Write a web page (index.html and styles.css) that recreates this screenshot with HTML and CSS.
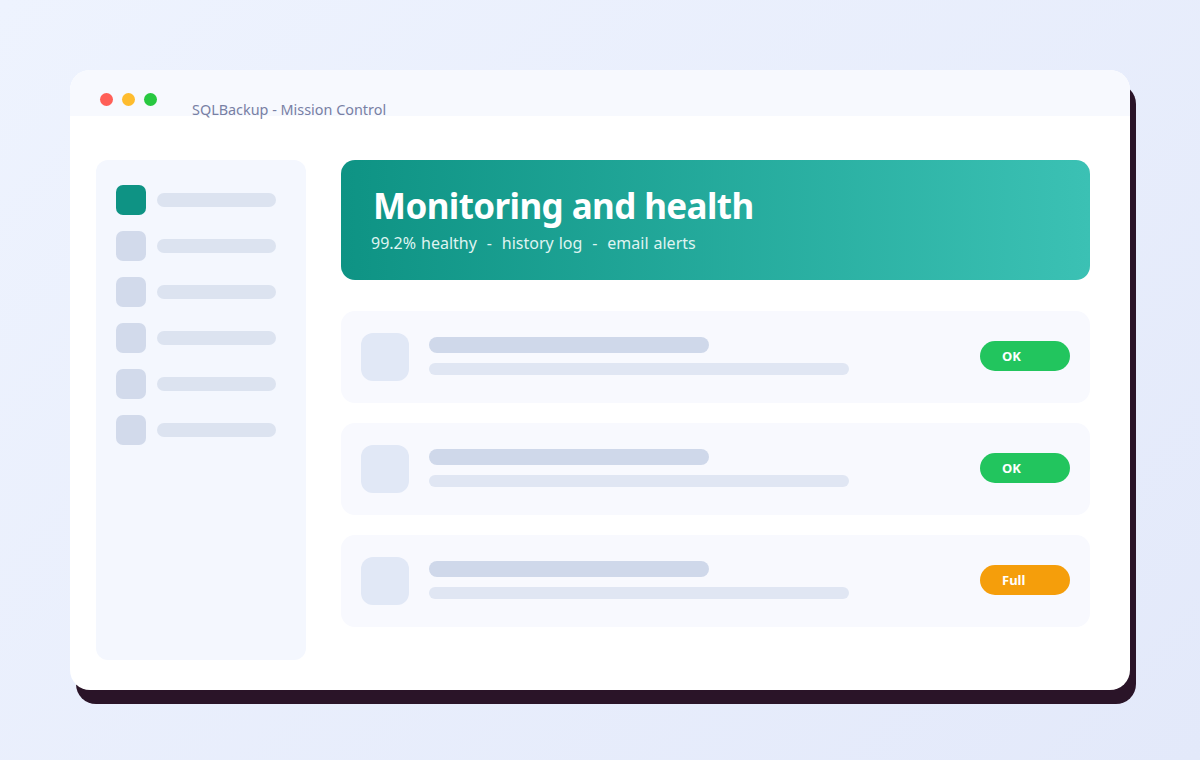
FILE: index.html
```html
<!DOCTYPE html>
<html lang="en">
<head>
<meta charset="utf-8">
<title>SQLBackup - Mission Control</title>
<link rel="stylesheet" href="styles.css">
</head>
<body>
<div class="window">
  <div class="titlebar">
    <div class="dots">
      <span class="dot red"></span>
      <span class="dot yellow"></span>
      <span class="dot green"></span>
    </div>
    <div class="title">SQLBackup - Mission Control</div>
  </div>
  <div class="content">
    <aside class="sidebar">
      <div class="nav-item"><span class="nav-icon active"></span><span class="nav-bar"></span></div>
      <div class="nav-item"><span class="nav-icon"></span><span class="nav-bar"></span></div>
      <div class="nav-item"><span class="nav-icon"></span><span class="nav-bar"></span></div>
      <div class="nav-item"><span class="nav-icon"></span><span class="nav-bar"></span></div>
      <div class="nav-item"><span class="nav-icon"></span><span class="nav-bar"></span></div>
      <div class="nav-item"><span class="nav-icon"></span><span class="nav-bar"></span></div>
    </aside>
    <main class="main">
      <section class="hero">
        <h1 class="hero-title">Monitoring and health</h1>
        <p class="hero-sub">99.2% healthy  -  history log  -  email alerts</p>
      </section>
      <div class="row">
        <span class="row-icon"></span>
        <div class="row-lines"><span class="line-a"></span><span class="line-b"></span></div>
        <span class="badge ok">OK</span>
      </div>
      <div class="row">
        <span class="row-icon"></span>
        <div class="row-lines"><span class="line-a"></span><span class="line-b"></span></div>
        <span class="badge ok">OK</span>
      </div>
      <div class="row">
        <span class="row-icon"></span>
        <div class="row-lines"><span class="line-a"></span><span class="line-b"></span></div>
        <span class="badge full">Full</span>
      </div>
    </main>
  </div>
</div>
</body>
</html>
```

FILE: styles.css
```css
* { box-sizing: border-box; }
html, body { margin: 0; height: 100%; }
body {
  width: 1200px;
  height: 760px;
  padding: 70px;
  background: linear-gradient(135deg, #eef3fe 0%, #e3e9fa 100%);
  font-family: "Noto Sans", "Open Sans", sans-serif;
  overflow: hidden;
}
.window {
  width: 1060px;
  height: 620px;
  background: #ffffff;
  border-radius: 20px;
  box-shadow: 6px 14px 0 #2a1428;
  overflow: hidden;
  display: flex;
  flex-direction: column;
}
.titlebar {
  height: 46px;
  background: #f7f9fe;
  display: flex;
  align-items: flex-start;
  padding-left: 30px;
  flex-shrink: 0;
}
.dots {
  display: flex;
  gap: 9px;
  padding-top: 22.5px;
}
.dot {
  width: 13px;
  height: 13px;
  border-radius: 50%;
  display: block;
}
.dot.red { background: #ff5f57; }
.dot.yellow { background: #febc2e; }
.dot.green { background: #28c840; }
.title {
  margin-left: 35px;
  margin-top: 30px;
  font-size: 14.4px;
  line-height: 20px;
  color: #7880a4;
  white-space: nowrap;
}
.content {
  flex: 1;
  display: flex;
  gap: 35px;
  padding: 44px 40px 30px 26px;
}
.sidebar {
  width: 210px;
  background: #f4f7fe;
  border-radius: 12px;
  padding: 25px 20px;
  display: flex;
  flex-direction: column;
  gap: 16px;
}
.nav-item {
  display: flex;
  align-items: center;
  gap: 11px;
}
.nav-icon {
  width: 30px;
  height: 30px;
  border-radius: 7px;
  background: #d2daeb;
  display: block;
}
.nav-icon.active { background: #0e9384; }
.nav-bar {
  width: 119px;
  height: 14px;
  border-radius: 7px;
  background: #dce3f0;
  display: block;
}
.main {
  flex: 1;
  display: flex;
  flex-direction: column;
  gap: 20px;
}
.hero {
  height: 120px;
  border-radius: 14px;
  background: linear-gradient(90deg, #0e9384 0%, #3bc1b4 100%);
  padding: 24px 32px 0 32px;
  color: #ffffff;
  margin-bottom: 11px;
}
.hero-title {
  margin: 0;
  font-size: 35px;
  line-height: 44px;
  font-weight: 700;
  letter-spacing: -0.6px;
}
.hero-sub {
  margin: 4px 0 0 -2px;
  font-size: 16px;
  line-height: 22px;
  color: #dff4f1;
  white-space: pre;
  word-spacing: 0.8px;
}
.row {
  height: 92px;
  background: #f8f9fe;
  border-radius: 14px;
  padding: 0 20px;
  display: flex;
  align-items: center;
  gap: 20px;
}
.row-icon {
  width: 48px;
  height: 48px;
  border-radius: 12px;
  background: #e1e8f6;
  display: block;
  flex-shrink: 0;
}
.row-lines {
  flex: 1;
  display: flex;
  flex-direction: column;
  gap: 10px;
  margin-bottom: 3px;
}
.line-a {
  width: 280px;
  height: 16px;
  border-radius: 8px;
  background: #cfd8ea;
  display: block;
}
.line-b {
  width: 420px;
  height: 12px;
  border-radius: 6px;
  background: #e0e6f3;
  display: block;
}
.badge {
  width: 90px;
  height: 30px;
  border-radius: 15px;
  padding-left: 22px;
  font-size: 13px;
  line-height: 30px;
  font-weight: 700;
  color: #ffffff;
  flex-shrink: 0;
  margin-bottom: 2px;
}
.badge.ok { background: #22c55e; }
.badge.full { background: #f59e0b; }
```
